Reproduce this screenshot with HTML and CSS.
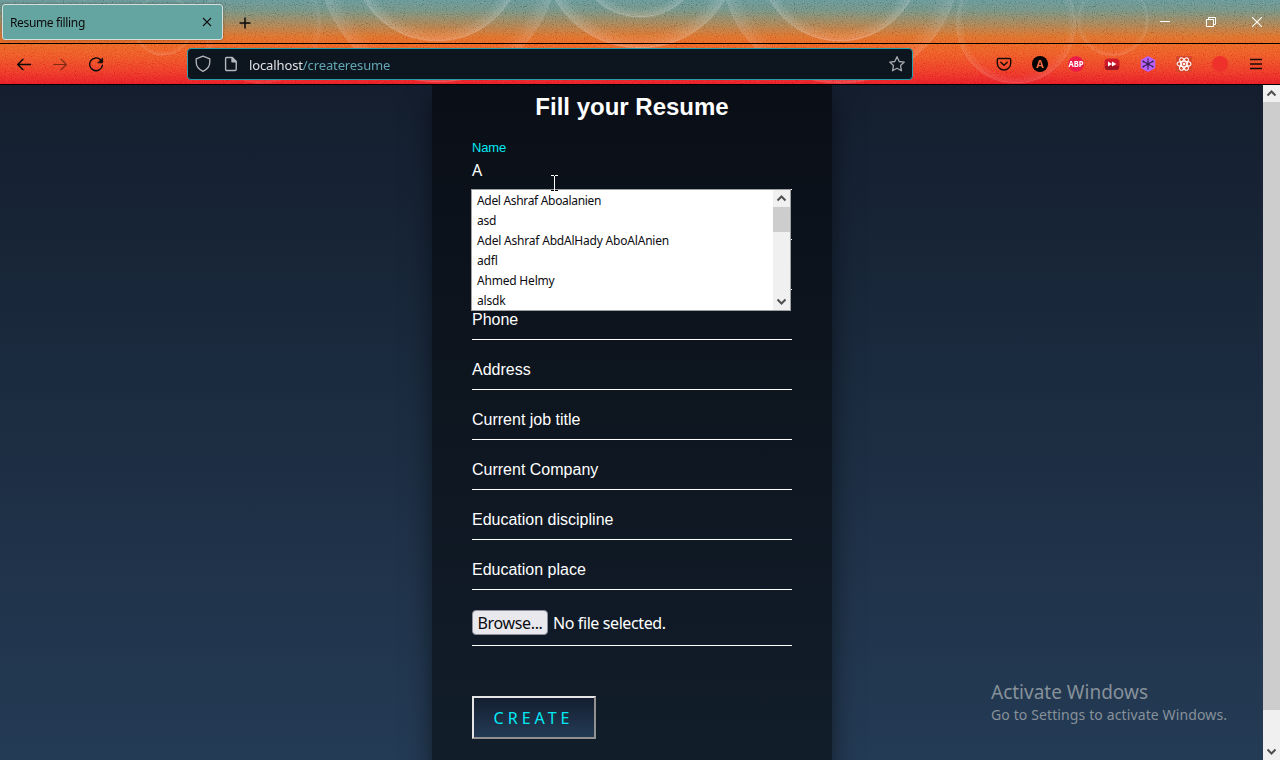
FILE: index.html
```html
<!DOCTYPE html>
<html lang="en">
<head>
<meta charset="utf-8">
<title>Resume filling</title>
<link rel="stylesheet" href="styles.css">
</head>
<body>
<div class="browser">
  <header class="chrome">
    <svg class="theme" width="1280" height="84" viewBox="0 0 1280 84" aria-hidden="true">
      <defs>
        <linearGradient id="rim" x1="0" y1="0" x2="0" y2="1">
          <stop offset="0.5" stop-color="#fff" stop-opacity="0"/>
          <stop offset="0.85" stop-color="#fff" stop-opacity="0.05"/>
          <stop offset="1" stop-color="#fff" stop-opacity="0.14"/>
        </linearGradient>
        <radialGradient id="glow" cx="0.5" cy="0.5" r="0.5">
          <stop offset="0.86" stop-color="#fff" stop-opacity="0"/>
          <stop offset="1" stop-color="#fff" stop-opacity="0.2"/>
        </radialGradient>
        <filter id="grain" x="0" y="0" width="100%" height="100%">
          <feTurbulence type="fractalNoise" baseFrequency="0.9" numOctaves="2" seed="4"/>
          <feColorMatrix type="matrix" values="1.5 0 0 0 -.4  1.5 0 0 0 -.4  1.5 0 0 0 -.4  0 0 0 0 1"/>
        </filter>
      </defs>
      <g fill="url(#glow)" stroke="url(#rim)" stroke-width="1.500">
        <circle cx="163" cy="25" r="30" opacity=".6"/>
        <circle cx="262" cy="24" r="59" opacity=".4"/>
        <circle cx="437" cy="-45" r="86"/>
        <circle cx="438" cy="-37" r="119" opacity=".7"/>
        <circle cx="640" cy="-48" r="65"/>
        <circle cx="640" cy="-51" r="99"/>
        <circle cx="840" cy="-40" r="81"/>
        <circle cx="840" cy="-37" r="120" opacity=".7"/>
        <circle cx="1016" cy="23" r="60" opacity=".6"/>
        <circle cx="1113" cy="20" r="35.500" opacity=".6"/>
      </g>
    </svg>
    <svg class="grain" width="1280" height="84"><rect width="1280" height="84" filter="url(#grain)"/></svg>
    <div class="tabbar">
      <div class="tab"><span class="tab-title">Resume filling</span>
        <svg width="10" height="10" viewBox="0 0 10 10"><path d="M1 1l8 8M9 1l-8 8" stroke="#111" stroke-width="1.1"/></svg>
      </div>
      <svg class="newtab" width="12" height="12" viewBox="0 0 12 12"><path d="M6 .5v11M.5 6h11" stroke="#0a0a0a" stroke-width="1.5"/></svg>
      <div class="wincontrols">
        <svg width="10" height="10" viewBox="0 0 10 10"><path d="M0 4.5h10" stroke="#fff"/></svg>
        <svg width="10" height="10" viewBox="0 0 10 10" fill="none" stroke="#fff"><path d="M.5 2.5h7v7h-7zM2.5 2.5v-2h7v7h-2"/></svg>
        <svg width="10" height="10" viewBox="0 0 10 10"><path d="M0 0l10 10M10 0L0 10" stroke="#fff" stroke-width="1.1"/></svg>
      </div>
    </div>
    <div class="toolbar">
      <nav class="nav">
        <svg width="16" height="16" viewBox="0 0 16 16" fill="none" stroke="#0a0a0a" stroke-width="1.4" stroke-linecap="round" stroke-linejoin="round"><path d="M14.500 8.500H1.800M7 3.200L1.700 8.500 7 13.800"/></svg>
        <svg width="16" height="16" viewBox="0 0 16 16" fill="none" stroke="#57220f" stroke-opacity=".75" stroke-width="1.2" stroke-linecap="round" stroke-linejoin="round"><path d="M1.500 8.500h12.700M9 3.200L14.300 8.500 9 13.800"/></svg>
        <svg width="16" height="16" viewBox="0 0 16 16" fill="none" stroke="#0a0a0a" stroke-width="1.4" stroke-linecap="round"><path d="M12.800 4A6.400 6.400 0 1 0 14.400 9.300"/><path d="M14.600 2.300v4.500H10.100z" fill="#0a0a0a" stroke-width=".8" stroke-linejoin="round"/></svg>
      </nav>
      <div class="urlbar">
        <svg width="16" height="18" viewBox="0 0 16 18" fill="none" stroke="#b4b7bb" stroke-width="1.3" stroke-linejoin="round"><path d="M8 1.200l6.800 2.700v3.200c0 4.200-2.300 7.300-6.800 9.300C3.500 14.400 1.200 11.300 1.200 7.100V3.900z"/></svg>
        <svg class="page-icon" width="14" height="16" viewBox="0 0 14 16" fill="none" stroke="#b4b7bb" stroke-width="1.4" stroke-linejoin="round"><path d="M2.200 1.500h6l4 4v7.800q0 1.200-1.200 1.200H2.800q-1.200 0-1.200-1.200V2.200z"/><path d="M8 1.500v4.200h4.200z" fill="#b4b7bb"/></svg>
        <span class="url">localhost<span class="path">/createresume</span></span>
        <svg width="18" height="18" viewBox="0 0 18 18" fill="none" stroke="#a5a8ad" stroke-width="1.3" stroke-linejoin="round"><path d="M9 1.700l2.200 4.800 5.100.6-3.800 3.500 1 5.200L9 13.200l-4.500 2.600 1-5.200-3.800-3.500 5.100-.6z"/></svg>
      </div>
      <div class="extensions">
        <svg width="16" height="16" viewBox="0 0 16 16" fill="none" stroke="#150b08" stroke-width="1.4" stroke-linecap="round" stroke-linejoin="round"><path d="M2.500 2.500h11q1.200 0 1.200 1.200v3.600a6.700 6.700 0 0 1-13.400 0V3.700q0-1.200 1.200-1.200z"/><path d="M4.800 6.300L8 9.200l3.200-2.900"/></svg>
        <svg width="16" height="16" viewBox="0 0 16 16"><circle cx="8" cy="8" r="8" fill="#000"/><text class="letter-a" x="8" y="12" text-anchor="middle">A</text></svg>
        <svg width="16" height="16" viewBox="0 0 16 16"><circle cx="8" cy="8" r="7.800" fill="#ec1c48"/><text class="letter-abp" x="0.500" y="11" textLength="15" lengthAdjust="spacingAndGlyphs">ABP</text></svg>
        <svg width="16" height="16" viewBox="0 0 16 16"><rect x=".500" y="2.500" width="15" height="11.500" rx="4" fill="#d01a2a"/><path d="M1 10h14v1q0 3-3 3H4q-3 0-3-3z" fill="#a01322"/><path d="M4 5.500v5L8 8zM8 5.500v5L12.300 8z" fill="#fff"/></svg>
        <svg width="16" height="16" viewBox="0 0 16 16"><path d="M8 0l7.200 4v8L8 16 .8 12V4z" fill="#b760fa"/><path d="M8 2.500v11M3 5.300l10 5.400M3 10.700l10-5.400" stroke="#35204f" stroke-width="1.100"/><g fill="#35204f"><circle cx="8" cy="8" r="1.500"/><circle cx="3.300" cy="5.400" r=".9"/><circle cx="12.700" cy="5.400" r=".9"/><circle cx="3.300" cy="10.600" r=".9"/><circle cx="12.700" cy="10.600" r=".9"/></g></svg>
        <svg width="16" height="16" viewBox="0 0 16 16"><rect width="16" height="16" rx="1.500" fill="#d5462a"/><g fill="none" stroke="#fff" stroke-width="1.100"><ellipse cx="8" cy="8" rx="7" ry="2.700"/><ellipse cx="8" cy="8" rx="7" ry="2.700" transform="rotate(60 8 8)"/><ellipse cx="8" cy="8" rx="7" ry="2.700" transform="rotate(120 8 8)"/></g><circle cx="8" cy="8" r="1.300" fill="#fff"/></svg>
        <svg width="16" height="16" viewBox="0 0 16 16"><circle cx="8" cy="8" r="8" fill="#ee322b"/></svg>
        <svg width="16" height="16" viewBox="0 0 16 16"><path d="M2 3.500h12M2 8h12M2 12.500h12" stroke="#180b08" stroke-width="1.300"/></svg>
      </div>
    </div>
  </header>
  <div class="viewport">
    <main class="page">
      <form class="card">
        <h1 class="title">Fill your Resume</h1>
        <div class="field name"><label class="label">Name</label><span class="value">A</span>
          <div class="dropdown">
            <ul class="options">
              <li class="first">Adel Ashraf Aboalanien</li><li>asd</li><li>Adel Ashraf AbdAlHady AboAlAnien</li><li>adfl</li><li>Ahmed Helmy</li><li>alsdk</li>
            </ul>
            <div class="scroll">
              <svg width="17" height="17" viewBox="0 0 17 17"><path d="M4.500 10.500l4-4 4 4" fill="none" stroke="#505050" stroke-width="2"/></svg>
              <div class="thumb short"></div>
              <svg class="end" width="17" height="17" viewBox="0 0 17 17"><path d="M4.500 6.500l4 4 4-4" fill="none" stroke="#505050" stroke-width="2"/></svg>
            </div>
          </div>
          <svg class="cursor" width="9" height="17" viewBox="0 0 9 17"><path d="M1 .5h3M5 .5h3M4.500 1v14" stroke="#fff" fill="none"/><path d="M1 15.500h3M5 15.500h3" stroke="#000"/></svg>
        </div>
        <div class="field"></div>
        <div class="field"></div>
        <div class="field">Phone</div>
        <div class="field">Address</div>
        <div class="field">Current job title</div>
        <div class="field">Current Company</div>
        <div class="field">Education discipline</div>
        <div class="field">Education place</div>
        <div class="file"><span class="browse">Browse...</span><span class="nofile">No file selected.</span></div>
        <button class="create" type="button">CREATE</button>
      </form>
      <aside class="watermark"><p class="wm-title">Activate Windows</p><p class="wm-text">Go to Settings to activate Windows.</p></aside>
    </main>
    <div class="scroll">
      <svg width="17" height="17" viewBox="0 0 17 17"><path d="M4.500 10.500l4-4 4 4" fill="none" stroke="#505050" stroke-width="2"/></svg>
      <div class="thumb long"></div>
      <svg class="end" width="17" height="17" viewBox="0 0 17 17"><path d="M4.500 6.500l4 4 4-4" fill="none" stroke="#505050" stroke-width="2"/></svg>
    </div>
  </div>
</div>
</body>
</html>
```
FILE: styles.css
```css
* { box-sizing: border-box; }
body { margin: 0; font-family: "Liberation Sans", Arial, sans-serif; }
svg { display: block; flex: none; }
.browser { width: 1280px; height: 760px; display: flex; flex-direction: column; overflow: hidden; }

.chrome { position: relative; isolation: isolate; height: 85px; flex: none; border-bottom: 1px solid #000; background: linear-gradient(#68999a 0, #769486 12%, #a8875a 28%, #d9752f 42%, #eb6823 52%, #ee5a26 66%, #ee3d27 84%, #e81d27 100%); }
.theme, .grain { position: absolute; left: 0; top: 0; }
.grain { mix-blend-mode: soft-light; opacity: .35; }
.tabbar { position: relative; height: 44px; display: flex; align-items: center; padding-left: 2px; border-bottom: 1px solid #000; }
.tab { width: 221px; height: 36px; display: flex; align-items: center; justify-content: space-between; padding: 0 10px 0 7px; border: 1px solid #d5dfdd; border-radius: 3px; background: #65a5a1; box-shadow: 0 0 3px rgba(0,0,0,.35); color: #0a0a0a; font: 12px "Noto Sans", sans-serif; letter-spacing: -.35px; }
.tab-title { padding-top: 1px; }
.newtab { margin: 2px 0 0 16px; }
.wincontrols { display: flex; gap: 36px; margin-left: auto; padding-right: 18px; }
.toolbar { position: relative; height: 40px; display: flex; align-items: center; padding: 0 16px; }
.nav { display: flex; gap: 20px; }
.urlbar { width: 726px; height: 32px; display: flex; align-items: center; margin: 0 0 0 83px; padding: 0 6px 0 7px; border: 1px solid #279dac; border-radius: 4px; background: #0d151f; }
.page-icon { margin-left: 13px; }
.url { flex: 1; margin-left: 11px; color: #dfe1e4; font: 13px "Noto Sans", sans-serif; padding-top: 1px; letter-spacing: -.12px; }
.path { color: #62a5b3; }
.extensions { display: flex; gap: 20px; margin-left: auto; }
.letter-a { font: bold 11px "Noto Sans", sans-serif; fill: #f26a3d; }
.letter-abp { font: bold 8.5px "Noto Sans", sans-serif; fill: #fff; }

.viewport { flex: 1; min-height: 0; display: flex; }
.page { position: relative; width: 1263px; padding-left: 432px; background: linear-gradient(#141e2e, #243b55); overflow: hidden; }
.card { width: 400px; height: 760px; padding: 6px 40px 0; background: rgba(0,0,0,.5); box-shadow: 0 15px 25px rgba(0,0,0,.5); color: #fff; }
.title { margin: 0; height: 49px; line-height: 32px; font-size: 24px; text-align: center; }
.field { height: 50px; padding-top: 20px; border-bottom: 1px solid #fff; font-size: 16px; line-height: 19px; }
.name { position: relative; padding-top: 0; }
.label { display: block; font-size: 13px; line-height: 15px; letter-spacing: -.15px; color: #03e9f4; }
.value { display: block; margin-top: 5px; font: 16px/20px "Noto Sans", sans-serif; }
.dropdown { position: absolute; left: -1px; top: 49px; z-index: 1; width: 320px; height: 122px; display: flex; border: 1px solid #a0a0a0; background: #fff; }
.options { flex: 1; margin: 0; padding: 1px 0 0 5px; list-style: none; overflow: hidden; color: #0b0b10; font: 12px/20px "Noto Sans", sans-serif; letter-spacing: -.2px; }
.first { letter-spacing: -.32px; }
.scroll { width: 17px; flex: none; display: flex; flex-direction: column; background: #f0f0f0; }
.thumb { background: #cdcdcd; }
.short { height: 25px; }
.long { height: 608px; }
.end { margin-top: auto; }
.cursor { position: absolute; left: 78px; top: 35px; z-index: 2; }
.file { height: 56px; padding-top: 20px; display: flex; align-items: flex-start; border-bottom: 1px solid #fff; font: 16px "Noto Sans", sans-serif; }
.browse { width: 76px; height: 25px; line-height: 25px; text-align: center; border: 1px solid #8f8f9d; border-radius: 4px; background: #e9e9ed; color: #0b0b10; letter-spacing: -.35px; }
.nofile { margin-left: 5px; line-height: 27px; letter-spacing: -.4px; }
.create { display: block; width: 124px; height: 43px; margin-top: 50px; padding: 0 1px 0 0; border: 2px outset #e5e5e5; background: linear-gradient(#141e30, #243b55); color: #03e9f4; font: 16px "Noto Sans", sans-serif; letter-spacing: 4px; }
.watermark { position: absolute; left: 991px; top: 595px; color: #87919a; font-family: "Noto Sans", sans-serif; white-space: nowrap; }
.watermark p { margin: 0; }
.wm-title { font-size: 19px; line-height: 24px; }
.wm-text { font-size: 14px; line-height: 22px; letter-spacing: .12px; }
```
